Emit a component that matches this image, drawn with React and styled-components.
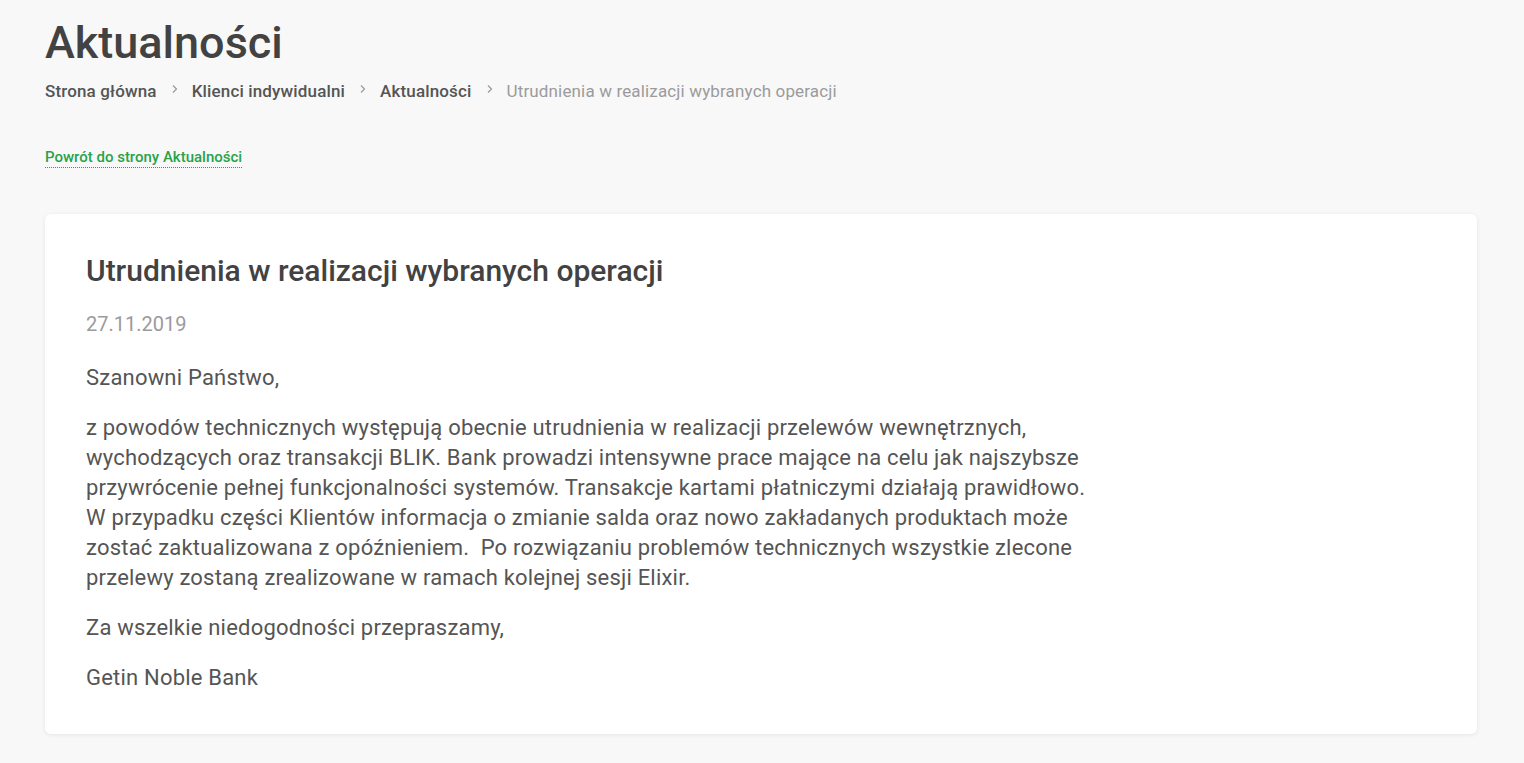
import React from 'react';
import styled, { createGlobalStyle } from 'styled-components';

const GlobalStyle = createGlobalStyle`
    body {
        margin: 0;
        background: #f8f8f8;
        font-family: Roboto, "Liberation Sans", Arial, sans-serif;
        color: #555;
    }
`;

const crumbs = [
    { label: "Strona główna" },
    { label: "Klienci indywidualni" },
    { label: "Aktualności" },
    { label: "Utrudnienia w realizacji wybranych operacji", current: true }
];

const paragraphs = [
    "Szanowni Państwo,",
    "z powodów technicznych występują obecnie utrudnienia w realizacji przelewów wewnętrznych, wychodzących oraz transakcji BLIK. Bank prowadzi intensywne prace mające na celu jak najszybsze przywrócenie pełnej funkcjonalności systemów. Transakcje kartami płatniczymi działają prawidłowo. W przypadku części Klientów informacja o zmianie salda oraz nowo zakładanych produktach może zostać zaktualizowana z opóźnieniem.\u00a0 Po rozwiązaniu problemów technicznych wszystkie zlecone przelewy zostaną zrealizowane w ramach kolejnej sesji Elixir.",
    "Za wszelkie niedogodności przepraszamy,",
    "Getin Noble Bank"
];

function Chevron() {
    return (
        <svg width="6" height="10" viewBox="0 0 6 10">
            <path d="M1 1.5 L4.5 5 L1 8.5" fill="none" stroke="#9a9a9a" strokeWidth="1.2" />
        </svg>
    );
}

function App() {
    return (
        <Page>
            <GlobalStyle />
            <PageTitle>Aktualności</PageTitle>
            <Breadcrumbs>
                {crumbs.map((c, i) => (
                    <Crumb key={i} $current={c.current}>
                        {i > 0 && <Sep><Chevron /></Sep>}
                        {c.label}
                    </Crumb>
                ))}
            </Breadcrumbs>
            <BackLink href="#">Powrót do strony Aktualności</BackLink>
            <Card>
                <ArticleTitle>Utrudnienia w realizacji wybranych operacji</ArticleTitle>
                <ArticleDate>27.11.2019</ArticleDate>
                <Body>
                    {paragraphs.map((p, i) => (
                        <p key={i}>{p}</p>
                    ))}
                </Body>
            </Card>
        </Page>
    );
}

export default App;

const Page = styled.div`
    padding: 15px 47px 29px 45px;
    display: flex;
    flex-direction: column;
    align-items: flex-start;
`;

const PageTitle = styled.h1`
    margin: 0;
    font-size: 45px;
    line-height: 55px;
    font-weight: 500;
    color: #424242;
`;

const Breadcrumbs = styled.ul`
    list-style: none;
    margin: 9px 0 0;
    padding: 0;
    display: flex;
    align-items: center;
`;

const Crumb = styled.li`
    display: flex;
    align-items: center;
    font-size: 17px;
    line-height: 24px;
    letter-spacing: 0.15px;
    font-weight: ${p => (p.$current ? 400 : 500)};
    color: ${p => (p.$current ? '#9b9b9b' : '#555')};
`;

const Sep = styled.span`
    display: inline-flex;
    margin: 0 14px 0 15px;
    position: relative;
    top: -2px;
`;

const BackLink = styled.a`
    margin-top: 46px;
    font-size: 15px;
    line-height: 16px;
    font-weight: 500;
    color: #27a34a;
    text-decoration: none;
    padding-bottom: 2px;
    border-bottom: 1px dotted #27a34a;
`;

const Card = styled.article`
    align-self: stretch;
    margin-top: 46px;
    background: #fff;
    border-radius: 6px;
    box-shadow: 0 1px 4px rgba(0, 0, 0, 0.08);
    padding: 39px 41px 41px;
`;

const ArticleTitle = styled.h2`
    margin: 0;
    font-size: 30px;
    line-height: 36px;
    font-weight: 500;
    color: #424242;
`;

const ArticleDate = styled.div`
    margin-top: 22px;
    font-size: 20px;
    line-height: 26px;
    color: #9b9b9b;
`;

const Body = styled.div`
    margin-top: 26px;
    max-width: 1010px;

    p {
        margin: 0 0 20px;
        font-size: 22px;
        line-height: 30px;
        letter-spacing: 0.2px;
        color: #555;
    }
    p:last-child {
        margin-bottom: 0;
    }
`;
